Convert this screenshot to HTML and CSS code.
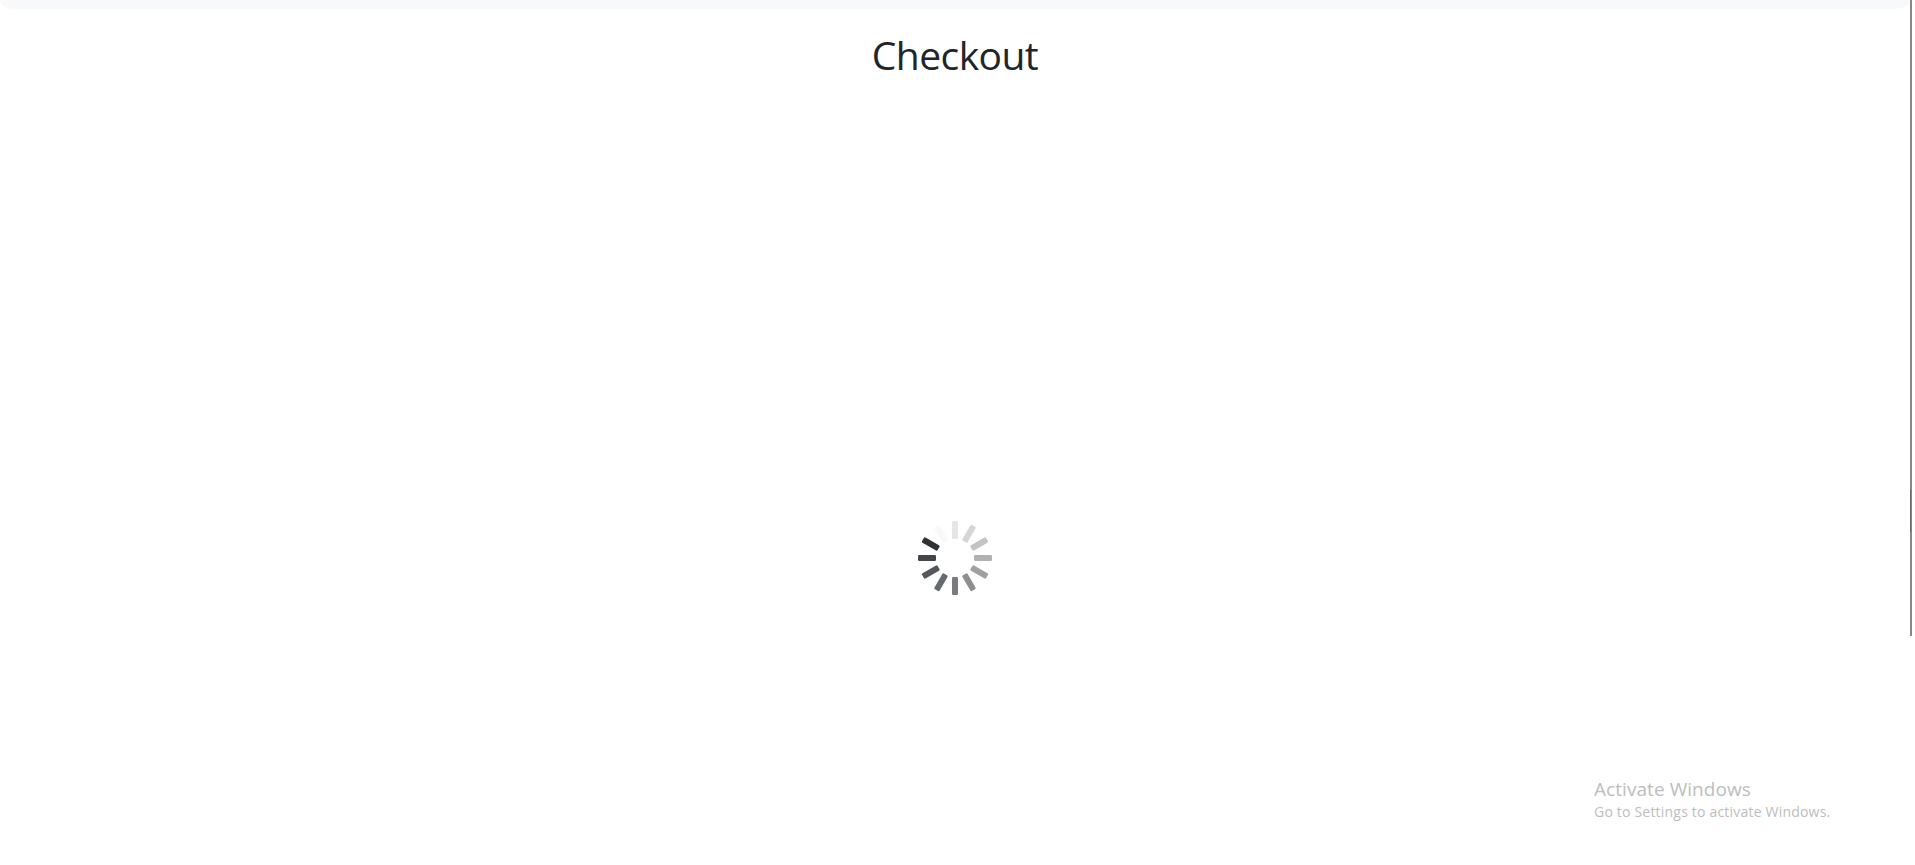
FILE: index.html
```html
<!DOCTYPE html>
<html lang="en">
<head>
<meta charset="utf-8">
<title>Checkout</title>
<link rel="stylesheet" href="styles.css">
</head>
<body>
<div class="page">
  <header class="header"></header>
  <h1 class="title"><span class="title-text">Checkout</span></h1>
  <main class="loader">
    <svg class="spinner" width="80" height="80" viewBox="-40 -40 80 80" role="img" aria-label="Loading">
      <defs><rect id="spoke" x="-3" y="-37" width="6" height="18" rx="1.2"/></defs>
      <use href="#spoke" fill="#e6e6e6"/>
      <use href="#spoke" fill="#d5d5d6" transform="rotate(30)"/>
      <use href="#spoke" fill="#c3c4c5" transform="rotate(60)"/>
      <use href="#spoke" fill="#b0b1b3" transform="rotate(90)"/>
      <use href="#spoke" fill="#9fa0a2" transform="rotate(120)"/>
      <use href="#spoke" fill="#8c8e90" transform="rotate(150)"/>
      <use href="#spoke" fill="#797b7f" transform="rotate(180)"/>
      <use href="#spoke" fill="#66696d" transform="rotate(210)"/>
      <use href="#spoke" fill="#54575b" transform="rotate(240)"/>
      <use href="#spoke" fill="#42454a" transform="rotate(270)"/>
      <use href="#spoke" fill="#2f3338" transform="rotate(300)"/>
      <use href="#spoke" fill="#f9f9f9" transform="rotate(330)"/>
    </svg>
  </main>
</div>
<div class="scrollbar"><div class="scrollbar-mark"></div></div>
<aside class="watermark">
  <p class="watermark-title">Activate Windows</p>
  <p class="watermark-text">Go to Settings to activate Windows.</p>
</aside>
</body>
</html>
```
FILE: styles.css
```css
body {
  margin: 0;
  height: 865px;
  overflow: hidden;
  background: #fff;
  color: #212529;
  font-family: "Segoe UI", "Open Sans", "Noto Sans", sans-serif;
}
.page {
  width: 1910px;
}
.header {
  height: 9px;
  background: linear-gradient(#f8f9fa, #f8f9fa) 0 0 / 100% 100%;
  border-radius: 0 0 14px 14px / 0 0 9px 9px;
}
.title {
  margin: 22px 0 0;
  text-align: center;
  font-size: 39px;
  font-weight: 400;
  line-height: 48px;
}
.title-text {
  letter-spacing: -0.55px;
}
.loader {
  display: flex;
  justify-content: center;
  padding-top: 439px;
}
.spinner {
  display: block;
}
.scrollbar {
  position: absolute;
  top: 0;
  left: 1910px;
  width: 2px;
  height: 636px;
  box-sizing: border-box;
  padding-top: 490px;
  background: #888;
}
.scrollbar-mark {
  width: 1px;
  height: 42px;
  background: #666;
}
.watermark {
  position: absolute;
  left: 1594px;
  top: 776px;
  color: #bdbdbd;
  white-space: nowrap;
}
.watermark p {
  margin: 0;
}
.watermark-title {
  font-size: 19px;
  line-height: 27px;
  letter-spacing: 0.06px;
}
.watermark-text {
  font-size: 14px;
  line-height: 18px;
  letter-spacing: 0.2px;
}
```
